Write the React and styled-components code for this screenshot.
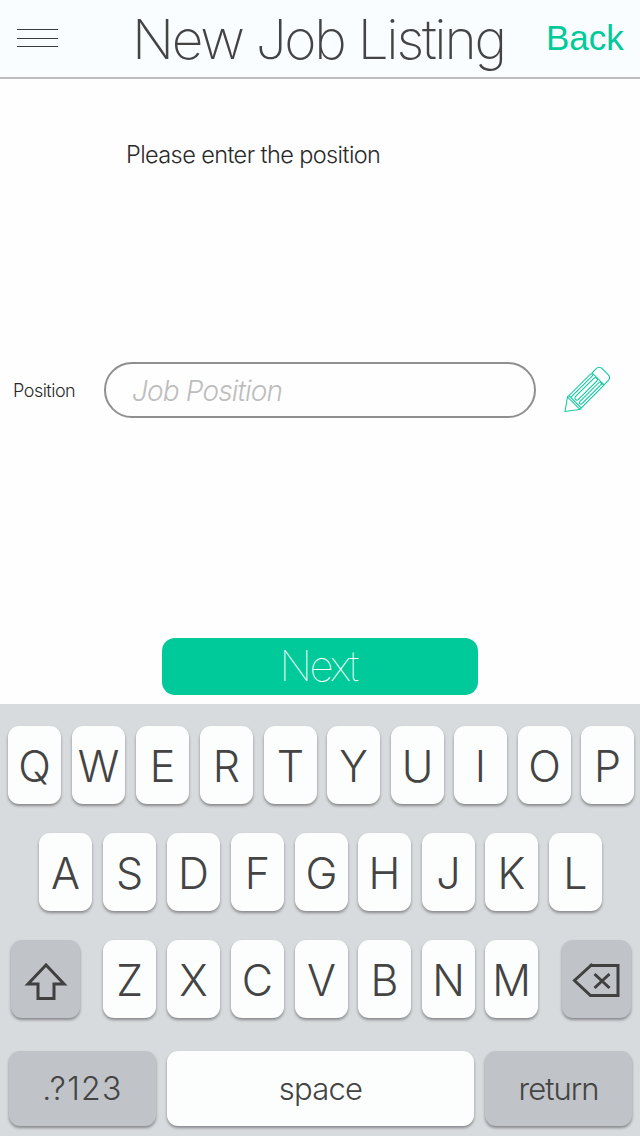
import React from "react";
import styled, { createGlobalStyle } from "styled-components";

const Global = createGlobalStyle`
  * { box-sizing: border-box; }
  body { margin: 0; background: #fff; }
`;

const Screen = styled.main`
  width: 640px;
  height: 1136px;
  display: flex;
  flex-direction: column;
  overflow: hidden;
  background: #fefefe;
  font-family: Inter, "Liberation Sans", sans-serif;
  color: #2a2a2a;
`;

const Header = styled.header`
  height: 79px;
  flex: none;
  display: flex;
  background: #fafdff;
  border-bottom: 2px solid #bcbcbe;
`;

const MenuButton = styled.button`
  width: 41px;
  height: 18px;
  margin: 29px 0 0 17px;
  padding: 0;
  border: 0;
  background: none;
  flex: none;
  display: flex;
  flex-direction: column;
  justify-content: space-between;
`;

const MenuLine = styled.span`
  height: 1px;
  width: 100%;
  background: #3c3c3c;
`;

const Label = styled.span`
  display: block;
  white-space: nowrap;
  font-size: ${(p) => p.$size}px;
  font-weight: ${(p) => p.$weight || 300};
  letter-spacing: ${(p) => p.$track || 0}px;
  line-height: 1;
`;

const Title = styled(Label).attrs({ as: "h1" })`
  width: 400px;
  margin: 12px 0 0 74px;
  color: #444;
`;

const BackLink = styled(Label).attrs({ as: "a" })`
  margin: 20px 0 0 14px;
  font-family: "Liberation Sans", sans-serif;
  color: #00ca99;
`;

const Prompt = styled(Label).attrs({ as: "p" })`
  margin: 64px 0 0 126px;
  height: 24px;
`;

const Field = styled.div`
  margin-top: 195px;
  height: 56px;
  display: flex;
  align-items: center;
`;

const FieldName = styled(Label)`
  width: 91px;
  margin-left: 13px;
  padding-top: 2px;
`;

const InputBox = styled.div`
  width: 432px;
  height: 56px;
  border: 2px solid #8f8f8f;
  border-radius: 28px;
  padding: 13px 0 0 26px;
  color: #bdbdbd;
  font-style: italic;
`;

const PencilIcon = styled.svg`
  width: 48px;
  height: 48px;
  margin-left: 27px;
  flex: none;
`;

const NextButton = styled.button`
  width: 316px;
  height: 57px;
  margin: 220px auto 0;
  padding: 0 4px 1px 0;
  border: 0;
  border-radius: 13px;
  background: #00ca99;
  color: #fff;
  font-family: inherit;
  display: flex;
  justify-content: center;
  align-items: center;
  flex: none;
`;

const Keyboard = styled.section`
  flex: none;
  height: 432px;
  margin-top: 9px;
  padding-top: 22px;
  background: #d8dbde;
  color: #444;
`;

const KeyRow = styled.div`
  display: flex;
  padding-left: ${(p) => p.$left}px;
  margin-bottom: ${(p) => p.$below}px;
`;

const Key = styled.button`
  width: ${(p) => p.$w || 53}px;
  height: ${(p) => p.$h || 78}px;
  margin: 0 0 0 ${(p) => p.$gap || 0}px;
  padding: ${(p) => p.$drop || 0}px 0 0;
  flex: none;
  border: 0;
  border-radius: 11px;
  display: flex;
  align-items: center;
  justify-content: center;
  font-family: inherit;
  color: inherit;
  background: ${(p) => (p.$dark ? "#c0c3c8" : "#fcfefe")};
  box-shadow: 0 2px 3px rgba(0, 0, 0, 0.38);
`;

const KeyIcon = styled.svg`
  width: 50px;
  height: 40px;
  overflow: visible;
  fill: none;
  stroke: #404040;
  stroke-width: 3;
`;

const TIGHT = "YIPHKBM";

function Letters({ keys }) {
  return keys.split("").map((k, i) => (
    <Key key={k} $drop={3} $gap={i === 0 ? 0 : TIGHT.includes(k) ? 10 : 11}>
      <Label $size={43}>{k}</Label>
    </Key>
  ));
}

export default function App() {
  return (
    <Screen>
      <Global />
      <Header>
        <MenuButton aria-label="Menu">
          <MenuLine /><MenuLine /><MenuLine />
        </MenuButton>
        <Title $size={55} $weight={200} $track={-2.3}>New Job Listing</Title>
        <BackLink $size={35} $weight={400}>Back</BackLink>
      </Header>
      <Prompt $size={23.5} $track={-0.6}>Please enter the position</Prompt>
      <Field>
        <FieldName $size={18} $track={-0.5}>Position</FieldName>
        <InputBox><Label $size={28} $weight={300} $track={-0.85}>Job Position</Label></InputBox>
        <PencilIcon viewBox="563 366 48 48" fill="none" stroke="#00ca99" strokeWidth="1">
          <g transform="translate(567.5 397) rotate(-45)">
            <path d="M0 0L-12 8.5L0 17.5ZM2 0V17.5M0 0H33Q34 1.3 33 2.6H2M0 17.5H33.5" />
            <rect x="4" y="5.4" width="30" height="4" rx="1.8" />
            <path d="M33.5 17.5Q35 16 33.5 14.5V14.5Q34.5 12 32.5 12H5.5Q4 12 4 13.5Q4 15 5.5 15H33.5" />
            <path d="M34.5 0.3H40Q44.5 0.3 44.5 4.5V13Q44.5 17.2 40 17.2H34.5Z" />
          </g>
        </PencilIcon>
      </Field>
      <NextButton><Label $size={42} $weight={100} $track={-2.5}>Next</Label></NextButton>
      <Keyboard>
        <KeyRow $left={8} $below={29}><Letters keys="QWERTYUIOP" /></KeyRow>
        <KeyRow $left={39} $below={29}><Letters keys="ASDFGHJKL" /></KeyRow>
        <KeyRow $left={11} $below={33}>
          <Key $dark $w={69} aria-label="Shift">
            <KeyIcon viewBox="20.5 959 50 40">
              <path d="M45.5 965L27.5 984H37.5V998.5H53.5V984H63.5Z" />
            </KeyIcon>
          </Key>
          <KeyRow $left={23} $below={0}><Letters keys="ZXCVBNM" /></KeyRow>
          <Key $dark $w={69} $gap={24} aria-label="Delete">
            <KeyIcon viewBox="571.5 959 50 40">
              <path d="M589 965.5H617.5V995.5H590L574 980.5L592 964M594 974L609 988M609 974L594 988" />
            </KeyIcon>
          </Key>
        </KeyRow>
        <KeyRow $left={9} $below={0}>
          <Key $dark $w={147} $h={75} $drop={1}><Label $size={32} $track={1.3}>.?123</Label></Key>
          <Key $w={307} $h={75} $gap={11}><Label $size={31} $track={-0.8}>space</Label></Key>
          <Key $dark $w={147} $h={75} $gap={11}><Label $size={31} $track={-1}>return</Label></Key>
        </KeyRow>
      </Keyboard>
    </Screen>
  );
}
